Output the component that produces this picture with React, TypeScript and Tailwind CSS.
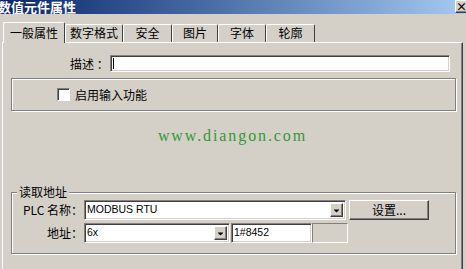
import { FaCaretDown } from "react-icons/fa";

const cjk = { fontFamily: '"Noto Sans CJK SC", "Liberation Sans", sans-serif' };

const sunken =
  "border border-t-[#808080] border-l-[#808080] border-b-white border-r-white shadow-[inset_1px_1px_0_#404040,inset_-1px_-1px_0_#d4d0c8] bg-white";
const raised =
  "border border-t-white border-l-white border-b-[#404040] border-r-[#404040] shadow-[inset_-1px_-1px_0_#808080] bg-[#d4d0c8]";

const tabs = ["一般属性", "数字格式", "安全", "图片", "字体", "轮廓"];
const tabWidths = ["w-[62px]", "w-[58px]", "w-[49px]", "w-[46px]", "w-[48px]", "w-[49px]"];

const Combo = ({ value, width }: { value: string; width: string }) => (
  <div className={`${sunken} ${width} h-[20px] flex items-center justify-between pl-[2px] pr-[2px]`}>
    <span className="text-[10.5px] text-black" style={{ fontFamily: '"Liberation Sans", sans-serif' }}>
      {value}
    </span>
    <div className={`${raised} w-[13px] h-[14px] flex items-center justify-center`}>
      <FaCaretDown className="text-[9px] text-black" />
    </div>
  </div>
);

export default function App() {
  return (
    <div className="w-[466px] h-[269px] overflow-hidden bg-[#d4d0c8] flex flex-col text-black" style={cjk}>
      {/* title bar */}
      <div className="h-[14px] bg-gradient-to-r from-[#0a246a] to-[#a6caf0] flex items-start justify-between">
        <span className="text-white font-bold text-[13px] leading-[13px] -ml-[2px]">数值元件属性</span>
        <div className={`${raised} w-[13px] h-[13px] -mr-[2px] flex items-center justify-center text-[11px] leading-none font-bold`}>
          ×
        </div>
      </div>

      {/* tabs */}
      <div className="mt-[8px] h-[20px] flex items-end pl-[3px] relative z-10">
        {tabs.map((t, i) => (
          <div
            key={t}
            className={`${tabWidths[i]} ${
              i === 0 ? "h-[21px] -mb-[1px] bg-[#d4d0c8] pt-[2px]" : "h-[18px]"
            } border-t border-l border-r border-t-white border-l-white border-r-[#404040] rounded-t-[2px] text-[12px] leading-[16px] flex justify-center`}
          >
            {t}
          </div>
        ))}
      </div>

      {/* tab panel */}
      <div className="ml-[2px] w-[461px] flex-1 border-t border-l border-r border-t-white border-l-white border-r-[#404040] shadow-[inset_-1px_0_0_#808080] flex flex-col">
        <div className="mt-[12px] ml-[67px] flex items-center h-[17px]">
          <span className="text-[12px] w-[40px]">描述 ：</span>
          <div className={`${sunken} w-[340px] h-[17px] flex items-center pl-[2px]`}>
            <div className="w-px h-[11px] bg-black" />
          </div>
        </div>

        <div className="mt-[6px] ml-[8px] w-[445px] h-[33px] border border-[#808080] shadow-[inset_1px_1px_0_white,1px_1px_0_white] flex items-center pl-[45px]">
          <div className="w-[13px] h-[13px] border border-t-[#808080] border-l-[#808080] border-b-white border-r-white shadow-[inset_1px_1px_0_#404040] bg-white" />
          <span className="ml-[5px] text-[12px]">启用输入功能</span>
        </div>

        <div className="h-[81px] flex justify-center pt-[16px]">
          <span
            className="text-[#339933] text-[16px] leading-[18px] tracking-[1.9px]"
            style={{ fontFamily: '"Liberation Serif", serif' }}
          >
            www.diangon.com
          </span>
        </div>

        <div className="relative ml-[8px] w-[445px] h-[62px] border border-[#808080] shadow-[inset_1px_1px_0_white,1px_1px_0_white] flex flex-col pt-[7px] gap-[3px]">
          <span className="absolute -top-[8px] left-[5px] px-[2px] bg-[#d4d0c8] text-[12px] leading-[14px]">读取地址</span>
          <div className="flex items-center">
            <span className="w-[71px] text-right text-[12px]">PLC 名称：</span>
            <div className="ml-[1px]">
              <Combo value="MODBUS RTU" width="w-[262px]" />
            </div>
            <div className={`${raised} ml-[3px] w-[80px] h-[20px] flex items-center justify-center text-[12px]`}>
              设置...
            </div>
          </div>
          <div className="flex items-center">
            <span className="w-[71px] text-right text-[12px]">地址：</span>
            <div className="ml-[1px]">
              <Combo value="6x" width="w-[146px]" />
            </div>
            <div className={`${sunken} ml-[1px] w-[81px] h-[20px] flex items-center pl-[2px]`}>
              <span className="text-[10.5px]" style={{ fontFamily: '"Liberation Sans", sans-serif' }}>
                1#8452
              </span>
            </div>
            <div className="w-[36px] h-[20px] border border-t-[#808080] border-l-[#808080] border-b-white border-r-white bg-[#d4d0c8]" />
          </div>
        </div>
      </div>
    </div>
  );
}
